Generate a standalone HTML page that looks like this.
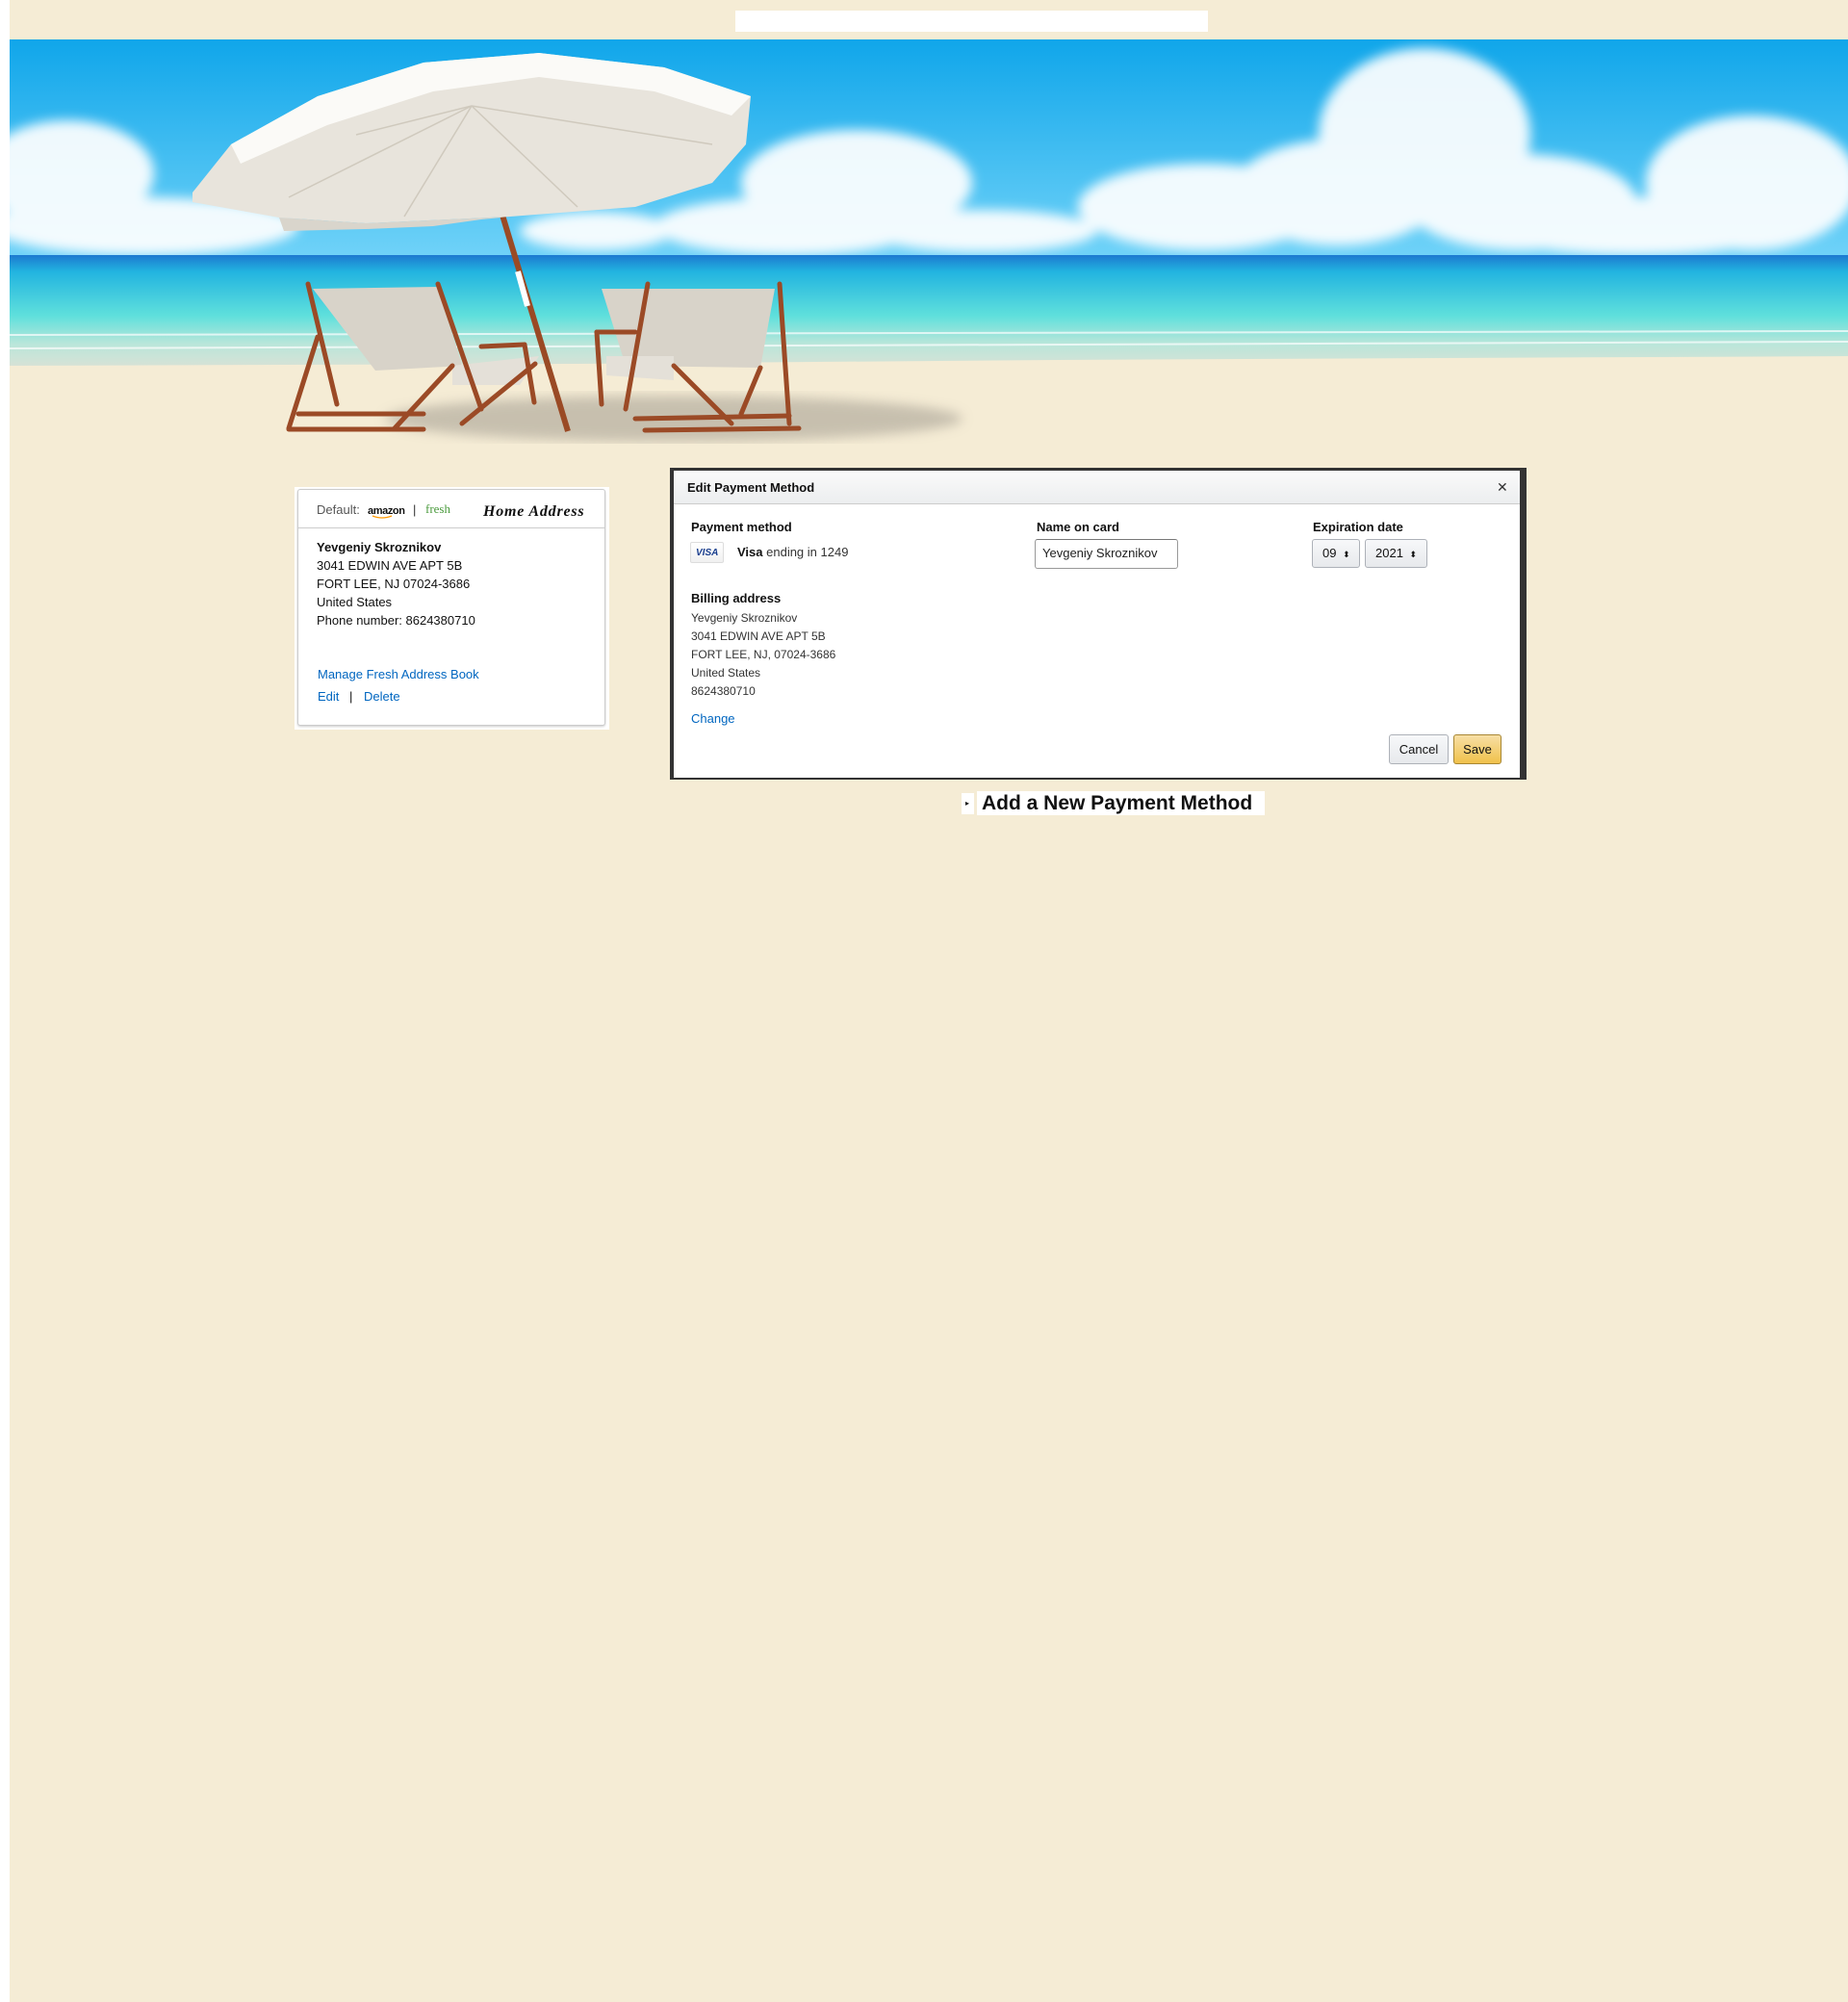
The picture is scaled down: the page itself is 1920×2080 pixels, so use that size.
<!DOCTYPE html>
<html><head><meta charset="utf-8">
<style>
*{margin:0;padding:0;box-sizing:border-box}
html,body{width:1920px;height:2080px;background:#fff;overflow:hidden}
body{font-family:"Liberation Sans",sans-serif;color:#111;position:relative}
#bg{position:absolute;left:10px;top:0;width:1910px;height:2080px;background:#f5ecd5}
.abs{position:absolute}
#topbar{left:764px;top:11px;width:491px;height:22px;background:#fff}
#card{left:309px;top:508px;width:320px;height:246px;background:#fff;border:1px solid #ccc;border-radius:3px;box-shadow:0 1px 2px rgba(0,0,0,.2)}
#cardwrap{left:306px;top:506px;width:327px;height:252px;background:#fff}
.t{position:absolute;font-size:13px;white-space:nowrap;line-height:16px}
.lnk{color:#0066c0}
#modal{left:696px;top:486px;width:890px;height:324px;background:#333}
#mi{left:700px;top:489px;width:879px;height:319px;background:#fff}
#mh{left:700px;top:489px;width:879px;height:35px;background:linear-gradient(#fafafa,#eceeef);border-bottom:1px solid #ccc}
.b{font-weight:bold}
.sel{position:absolute;height:30px;border:1px solid #adb1b8;border-radius:3px;background:linear-gradient(#f7f8fa,#e7e9ec);font-size:13px;line-height:28px;padding-left:10px}
</style></head><body>
<div id="bg"></div>
<div class="abs" id="topbar"></div>
<svg class="abs" style="left:10px;top:41px" width="1910" height="420" viewBox="10 41 1910 420">
<defs>
<linearGradient id="sky" x1="0" y1="0" x2="0" y2="1"><stop offset="0" stop-color="#10a6ea"/><stop offset="1" stop-color="#6fd2f8"/></linearGradient>
<linearGradient id="sea" x1="0" y1="0" x2="0" y2="1"><stop offset="0" stop-color="#1c79d0"/><stop offset=".15" stop-color="#22b4e0"/><stop offset=".55" stop-color="#5fe0dc"/><stop offset=".8" stop-color="#b9e6da"/><stop offset="1" stop-color="#d6e2d6"/></linearGradient>
<filter id="bl"><feGaussianBlur stdDeviation="6"/></filter>
</defs>
<rect x="10" y="41" width="1910" height="225" fill="url(#sky)"/>
<g fill="#fff" opacity=".92" filter="url(#bl)">
<ellipse cx="1480" cy="140" rx="110" ry="90"/><ellipse cx="1390" cy="200" rx="110" ry="55"/><ellipse cx="1580" cy="210" rx="120" ry="50"/>
<ellipse cx="1250" cy="215" rx="130" ry="45"/><ellipse cx="1820" cy="190" rx="110" ry="70"/><ellipse cx="1700" cy="235" rx="160" ry="30"/>
<ellipse cx="890" cy="190" rx="120" ry="55"/><ellipse cx="820" cy="235" rx="140" ry="30"/><ellipse cx="1020" cy="240" rx="120" ry="22"/>
<ellipse cx="70" cy="180" rx="90" ry="55"/><ellipse cx="150" cy="235" rx="160" ry="30"/><ellipse cx="620" cy="240" rx="80" ry="20"/>
</g>
<rect x="10" y="265" width="1910" height="115" fill="url(#sea)"/>
<g stroke="#fff" stroke-width="2" opacity=".7"><line x1="10" y1="348" x2="1920" y2="344"/><line x1="10" y1="362" x2="1920" y2="355"/></g>
<path d="M10 380 L600 378 L1100 374 L1920 370 L1920 461 L10 461Z" fill="#f5ecd5"/>
<ellipse cx="700" cy="435" rx="300" ry="24" fill="#b8b1a2" opacity=".75" filter="url(#bl)"/>
<line x1="487" y1="108" x2="590" y2="448" stroke="#9a4a25" stroke-width="6"/>
<line x1="538" y1="282" x2="548" y2="318" stroke="#fff" stroke-width="6"/>
<path d="M200 200 L240 150 L330 100 L440 65 L560 55 L690 70 L780 100 L775 150 L740 190 L660 215 L530 225 L380 232 L290 226 L200 210Z" fill="#e8e4dc"/>
<path d="M240 150 L330 100 L440 65 L560 55 L690 70 L780 100 L760 120 L680 95 L560 80 L450 95 L340 130 L250 170Z" fill="#fbfaf7"/>
<path d="M290 226 L295 240 L380 238 L450 235 L500 228 L530 225 L380 232Z" fill="#d9d5cc"/>
<g stroke="#cfc9bd" stroke-width="1.5" fill="none"><path d="M490 110 L300 205"/><path d="M490 110 L420 225"/><path d="M490 110 L600 215"/><path d="M490 110 L740 150"/><path d="M490 110 L370 140"/></g>
<g>
<path d="M325 300 L455 298 L480 380 L390 385 Z" fill="#d8d3c9"/>
<path d="M470 380 L560 370 L540 400 L470 400Z" fill="#e4e0d8"/>
<g stroke="#9b4a26" stroke-width="5" fill="none" stroke-linecap="round">
<path d="M320 295 L350 420"/><path d="M455 295 L500 425"/><path d="M330 350 L300 445"/><path d="M310 430 L440 430"/><path d="M300 446 L440 446"/><path d="M500 360 L545 358"/><path d="M545 358 L555 418"/><path d="M470 380 L410 445"/><path d="M556 378 L480 440"/>
</g>
<path d="M625 300 L805 300 L790 382 L650 380 Z" fill="#d8d3c9"/>
<path d="M630 370 L700 370 L700 395 L630 390Z" fill="#e4e0d8"/>
<g stroke="#9b4a26" stroke-width="5" fill="none" stroke-linecap="round">
<path d="M673 295 L650 425"/><path d="M810 295 L820 440"/><path d="M620 345 L625 420"/><path d="M620 345 L660 345"/><path d="M660 435 L820 432"/><path d="M670 447 L830 445"/><path d="M700 380 L760 440"/><path d="M790 382 L770 430"/>
</g>
</g>
</svg>

<div class="abs" id="cardwrap"></div>
<div class="abs" id="card"></div>
<div class="abs" style="left:309px;top:548px;width:320px;height:1px;background:#ccc"></div>
<div class="t" style="left:329px;top:522px;color:#555">Default:</div>
<div class="t b" style="left:382px;top:523px;font-size:11px;letter-spacing:-.4px">amazon</div>
<svg class="abs" style="left:386px;top:535px" width="22" height="5"><path d="M1 1 Q11 5 21 1" stroke="#f90" stroke-width="1.3" fill="none"/></svg>
<div class="t" style="left:429px;top:522px;color:#333">|</div>
<div class="t" style="left:442px;top:521px;color:#4a9a3c;font-family:'Liberation Serif',serif;font-size:13px">fresh</div>
<div class="t" style="left:502px;top:524px;font-family:'Liberation Serif',serif;font-style:italic;font-weight:bold;font-size:16px;letter-spacing:.8px">Home Address</div>
<div class="t b" style="left:329px;top:561px">Yevgeniy Skroznikov</div>
<div class="t" style="left:329px;top:580px">3041 EDWIN AVE APT 5B</div>
<div class="t" style="left:329px;top:599px">FORT LEE, NJ 07024-3686</div>
<div class="t" style="left:329px;top:618px">United States</div>
<div class="t" style="left:329px;top:637px">Phone number: 8624380710</div>
<div class="t lnk" style="left:330px;top:693px">Manage Fresh Address Book</div>
<div class="t lnk" style="left:330px;top:716px">Edit</div>
<div class="t" style="left:363px;top:716px">|</div>
<div class="t lnk" style="left:378px;top:716px">Delete</div>

<div class="abs" id="modal"></div>
<div class="abs" id="mi"></div>
<div class="abs" id="mh"></div>
<div class="t b" style="left:714px;top:499px">Edit Payment Method</div>
<div class="t" style="left:1555px;top:498px;font-size:14px;color:#333">✕</div>
<div class="t b" style="left:718px;top:540px">Payment method</div>
<div class="abs" style="left:717px;top:563px;width:35px;height:22px;border:1px solid #ddd;border-radius:2px;background:linear-gradient(#fff,#f0f0f0)"></div>
<div class="t b" style="left:723px;top:567px;font-size:10px;font-style:italic;color:#1a3f8f">VISA</div>
<div class="t" style="left:766px;top:566px;color:#333"><b style="color:#111">Visa</b> ending in 1249</div>
<div class="t b" style="left:1077px;top:540px">Name on card</div>
<div class="abs" style="left:1075px;top:560px;width:149px;height:31px;border:1px solid #999;border-top-color:#777;border-radius:3px;background:#fff"></div>
<div class="t" style="left:1083px;top:567px;color:#222">Yevgeniy Skroznikov</div>
<div class="t b" style="left:1364px;top:540px">Expiration date</div>
<div class="sel" style="left:1363px;top:560px;width:50px">09 <span style="font-size:9px;margin-left:3px">⬍</span></div>
<div class="sel" style="left:1418px;top:560px;width:65px">2021 <span style="font-size:9px;margin-left:3px">⬍</span></div>
<div class="t b" style="left:718px;top:614px">Billing address</div>
<div class="t" style="left:718px;top:634px;font-size:12px;color:#333">Yevgeniy Skroznikov</div>
<div class="t" style="left:718px;top:653px;font-size:12px;color:#333">3041 EDWIN AVE APT 5B</div>
<div class="t" style="left:718px;top:672px;font-size:12px;color:#333">FORT LEE, NJ, 07024-3686</div>
<div class="t" style="left:718px;top:691px;font-size:12px;color:#333">United States</div>
<div class="t" style="left:718px;top:710px;font-size:12px;color:#333">8624380710</div>
<div class="t lnk" style="left:718px;top:739px">Change</div>
<div class="abs" style="left:1443px;top:763px;width:62px;height:31px;border:1px solid #adb1b8;border-radius:3px;background:linear-gradient(#f7f8fa,#e7e9ec);font-size:13px;line-height:29px;text-align:center">Cancel</div>
<div class="abs" style="left:1510px;top:763px;width:50px;height:31px;border:1px solid #a88734;border-radius:3px;background:linear-gradient(#f7dfa5,#f0c14b);font-size:13px;line-height:29px;text-align:center">Save</div>

<div class="abs" style="left:999px;top:824px;width:13px;height:22px;background:#fff"></div>
<div class="t" style="left:1003px;top:827px;font-size:8px">▸</div>
<div class="abs" style="left:1015px;top:822px;width:299px;height:25px;background:#fff"></div>
<div class="t b" style="left:1020px;top:822px;font-size:21px;line-height:25px">Add a New Payment Method</div>
</body></html>
